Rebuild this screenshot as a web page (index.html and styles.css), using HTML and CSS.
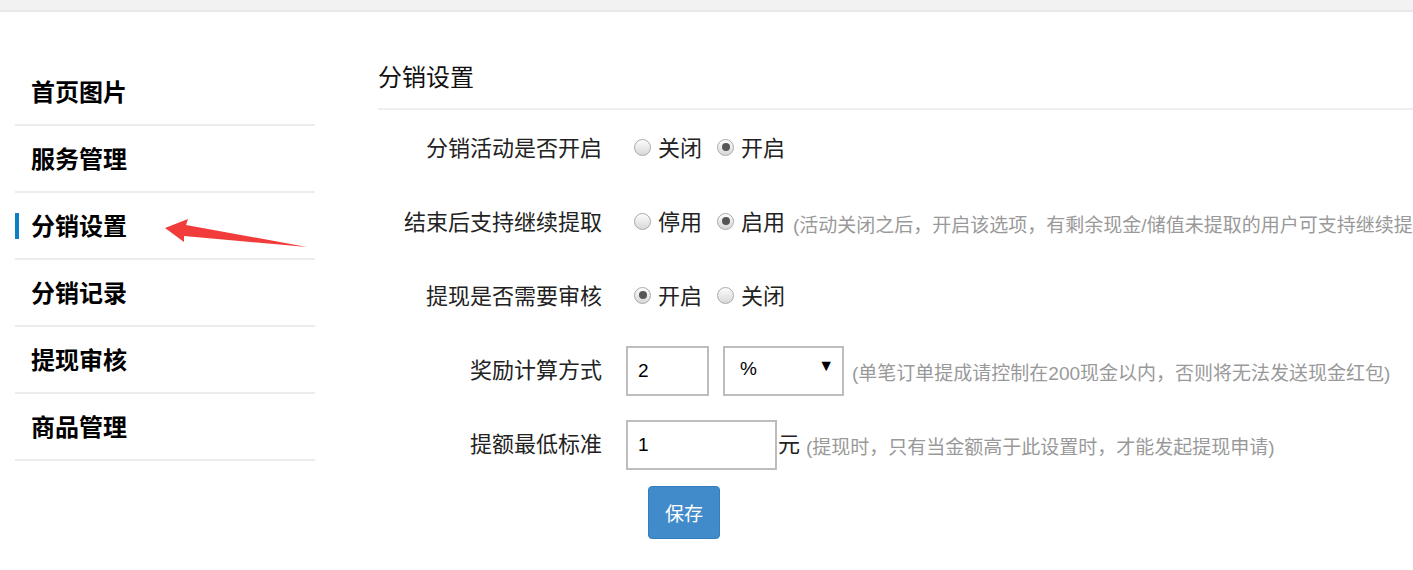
FILE: index.html
```html
<!DOCTYPE html>
<html lang="zh-CN">
<head>
    <meta charset="UTF-8">
    <title>分销设置</title>
    <link rel="stylesheet" href="styles.css">
</head>
<body>

<!-- Top bar -->
<div class="topbar"></div>

<div class="page">
    <!-- Side menu -->
    <ul class="side-menu">
        <li><a href="#">首页图片</a></li>
        <li><a href="#">服务管理</a></li>
        <li class="active">
            <a href="#">分销设置</a>
            <svg class="pointer" width="150" height="34" viewBox="0 0 150 34">
                <polygon points="0,9 23,0 21,6 142,28 19,17 19,23" fill="#f23c3c"/>
            </svg>
        </li>
        <li><a href="#">分销记录</a></li>
        <li><a href="#">提现审核</a></li>
        <li><a href="#">商品管理</a></li>
    </ul>

    <!-- Settings -->
    <div class="main">
        <h2 class="main-title">分销设置</h2>

        <form class="settings-form">
            <div class="form-row">
                <label class="row-label">分销活动是否开启</label>
                <div class="row-control">
                    <label class="radio"><input type="radio" name="open"> 关闭</label>
                    <label class="radio"><input type="radio" name="open" checked> 开启</label>
                </div>
            </div>

            <div class="form-row">
                <label class="row-label">结束后支持继续提取</label>
                <div class="row-control">
                    <label class="radio"><input type="radio" name="keep"> 停用</label>
                    <label class="radio"><input type="radio" name="keep" checked> 启用</label>
                    <span class="hint">(活动关闭之后，开启该选项，有剩余现金/储值未提取的用户可支持继续提取)</span>
                </div>
            </div>

            <div class="form-row">
                <label class="row-label">提现是否需要审核</label>
                <div class="row-control">
                    <label class="radio"><input type="radio" name="audit" checked> 开启</label>
                    <label class="radio"><input type="radio" name="audit"> 关闭</label>
                </div>
            </div>

            <div class="form-row">
                <label class="row-label">奖励计算方式</label>
                <div class="row-control">
                    <input class="text-input small" type="text" value="2">
                    <span class="select-wrap">
                        <select class="select-input">
                            <option>%</option>
                            <option>元</option>
                        </select>
                    </span>
                    <span class="hint">(单笔订单提成请控制在200现金以内，否则将无法发送现金红包)</span>
                </div>
            </div>

            <div class="form-row">
                <label class="row-label">提额最低标准</label>
                <div class="row-control">
                    <input class="text-input wide" type="text" value="1">
                    <span class="unit">元</span>
                    <span class="hint">(提现时，只有当金额高于此设置时，才能发起提现申请)</span>
                </div>
            </div>

            <div class="form-actions">
                <button type="submit" class="btn-save">保存</button>
            </div>
        </form>
    </div>
</div>

</body>
</html>
```

FILE: styles.css
```css
body {
    margin: 0;
    padding: 0;
    background-color: #fff;
    color: #222;
    font-family: "Liberation Sans", "Noto Sans CJK SC", sans-serif;
    overflow: hidden;
}

.topbar {
    height: 10px;
    background-color: #f2f2f2;
    border-bottom: 2px solid #e8e8e8;
}

.page {
    display: flex;
    align-items: flex-start;
}

/* Side menu */
.side-menu {
    list-style: none;
    margin: 47px 0 0 15px;
    padding: 0;
    width: 300px;
    flex-shrink: 0;
}

.side-menu li {
    position: relative;
    height: 65px;
    border-bottom: 2px solid #ececec;
    display: flex;
    align-items: center;
}

.side-menu a {
    padding: 3px 0 0 16px;
    font-size: 24px;
    font-weight: bold;
    color: #000;
    text-decoration: none;
    line-height: 30px;
}

.side-menu li.active::before {
    content: "";
    position: absolute;
    left: 0;
    top: 20px;
    width: 4px;
    height: 26px;
    background-color: #0b80c6;
}

.side-menu .pointer {
    position: absolute;
    left: 150px;
    top: 26px;
}

/* Main area */
.main {
    flex: 1;
    margin-left: 63px;
    padding-top: 48px;
    min-width: 0;
}

.main-title {
    margin: 0;
    font-size: 24px;
    font-weight: normal;
    line-height: 34px;
    padding-top: 1px;
    padding-bottom: 13px;
    border-bottom: 2px solid #eee;
    color: #111;
}

.settings-form {
    margin-top: 2px;
}

.form-row {
    display: flex;
    align-items: center;
    height: 74px;
    white-space: nowrap;
}

.row-label {
    width: 224px;
    flex-shrink: 0;
    text-align: right;
    font-size: 22px;
    line-height: 30px;
    color: #222;
}

.row-control {
    display: flex;
    align-items: center;
    padding-left: 24px;
}

.radio {
    display: flex;
    align-items: center;
    font-size: 22px;
    line-height: 30px;
    margin-left: 8px;
    margin-right: 7px;
    cursor: pointer;
}

.radio input {
    -webkit-appearance: none;
    appearance: none;
    width: 17px;
    height: 17px;
    margin: 0 7px 4px 0;
    border: 1px solid #a9a9a9;
    border-radius: 50%;
    background: linear-gradient(#fcfcfc, #d8d8d8);
    position: relative;
}

.radio input:checked::after {
    content: "";
    position: absolute;
    left: 3.5px;
    top: 3.5px;
    width: 8px;
    height: 8px;
    border-radius: 50%;
    background-color: #555;
}

.hint {
    font-size: 19px;
    color: #999;
    margin-left: 1px;
}

.text-input {
    height: 50px;
    box-sizing: border-box;
    border: 2px solid #bdbdbd;
    padding: 0 10px;
    font-size: 19px;
    font-family: "Liberation Sans", sans-serif;
    color: #000;
    outline: none;
}

.text-input.small {
    width: 83px;
}

.text-input.wide {
    width: 151px;
}

.select-wrap {
    position: relative;
    margin-left: 14px;
    margin-right: 7px;
}

.select-wrap::after {
    content: "▼";
    position: absolute;
    right: 10px;
    top: 11px;
    font-size: 16px;
    color: #000;
    pointer-events: none;
}

.select-input {
    -webkit-appearance: none;
    appearance: none;
    width: 121px;
    height: 50px;
    box-sizing: border-box;
    border: 2px solid #bdbdbd;
    border-radius: 0;
    background-color: #fff;
    padding: 0 0 6px 15px;
    font-size: 19px;
    font-family: "Liberation Sans", sans-serif;
    color: #000;
}

.unit {
    font-size: 22px;
    line-height: 30px;
    margin-left: 1px;
    margin-right: 5px;
}

.form-actions {
    padding-left: 270px;
    margin-top: 4px;
}

.btn-save {
    width: 72px;
    height: 53px;
    background-color: #428bca;
    border: 1px solid #357ebd;
    border-radius: 4px;
    color: #fff;
    font-size: 19px;
    font-family: "Liberation Sans", "Noto Sans CJK SC", sans-serif;
    cursor: pointer;
}

.btn-save:hover {
    background-color: #3071a9;
}
```
